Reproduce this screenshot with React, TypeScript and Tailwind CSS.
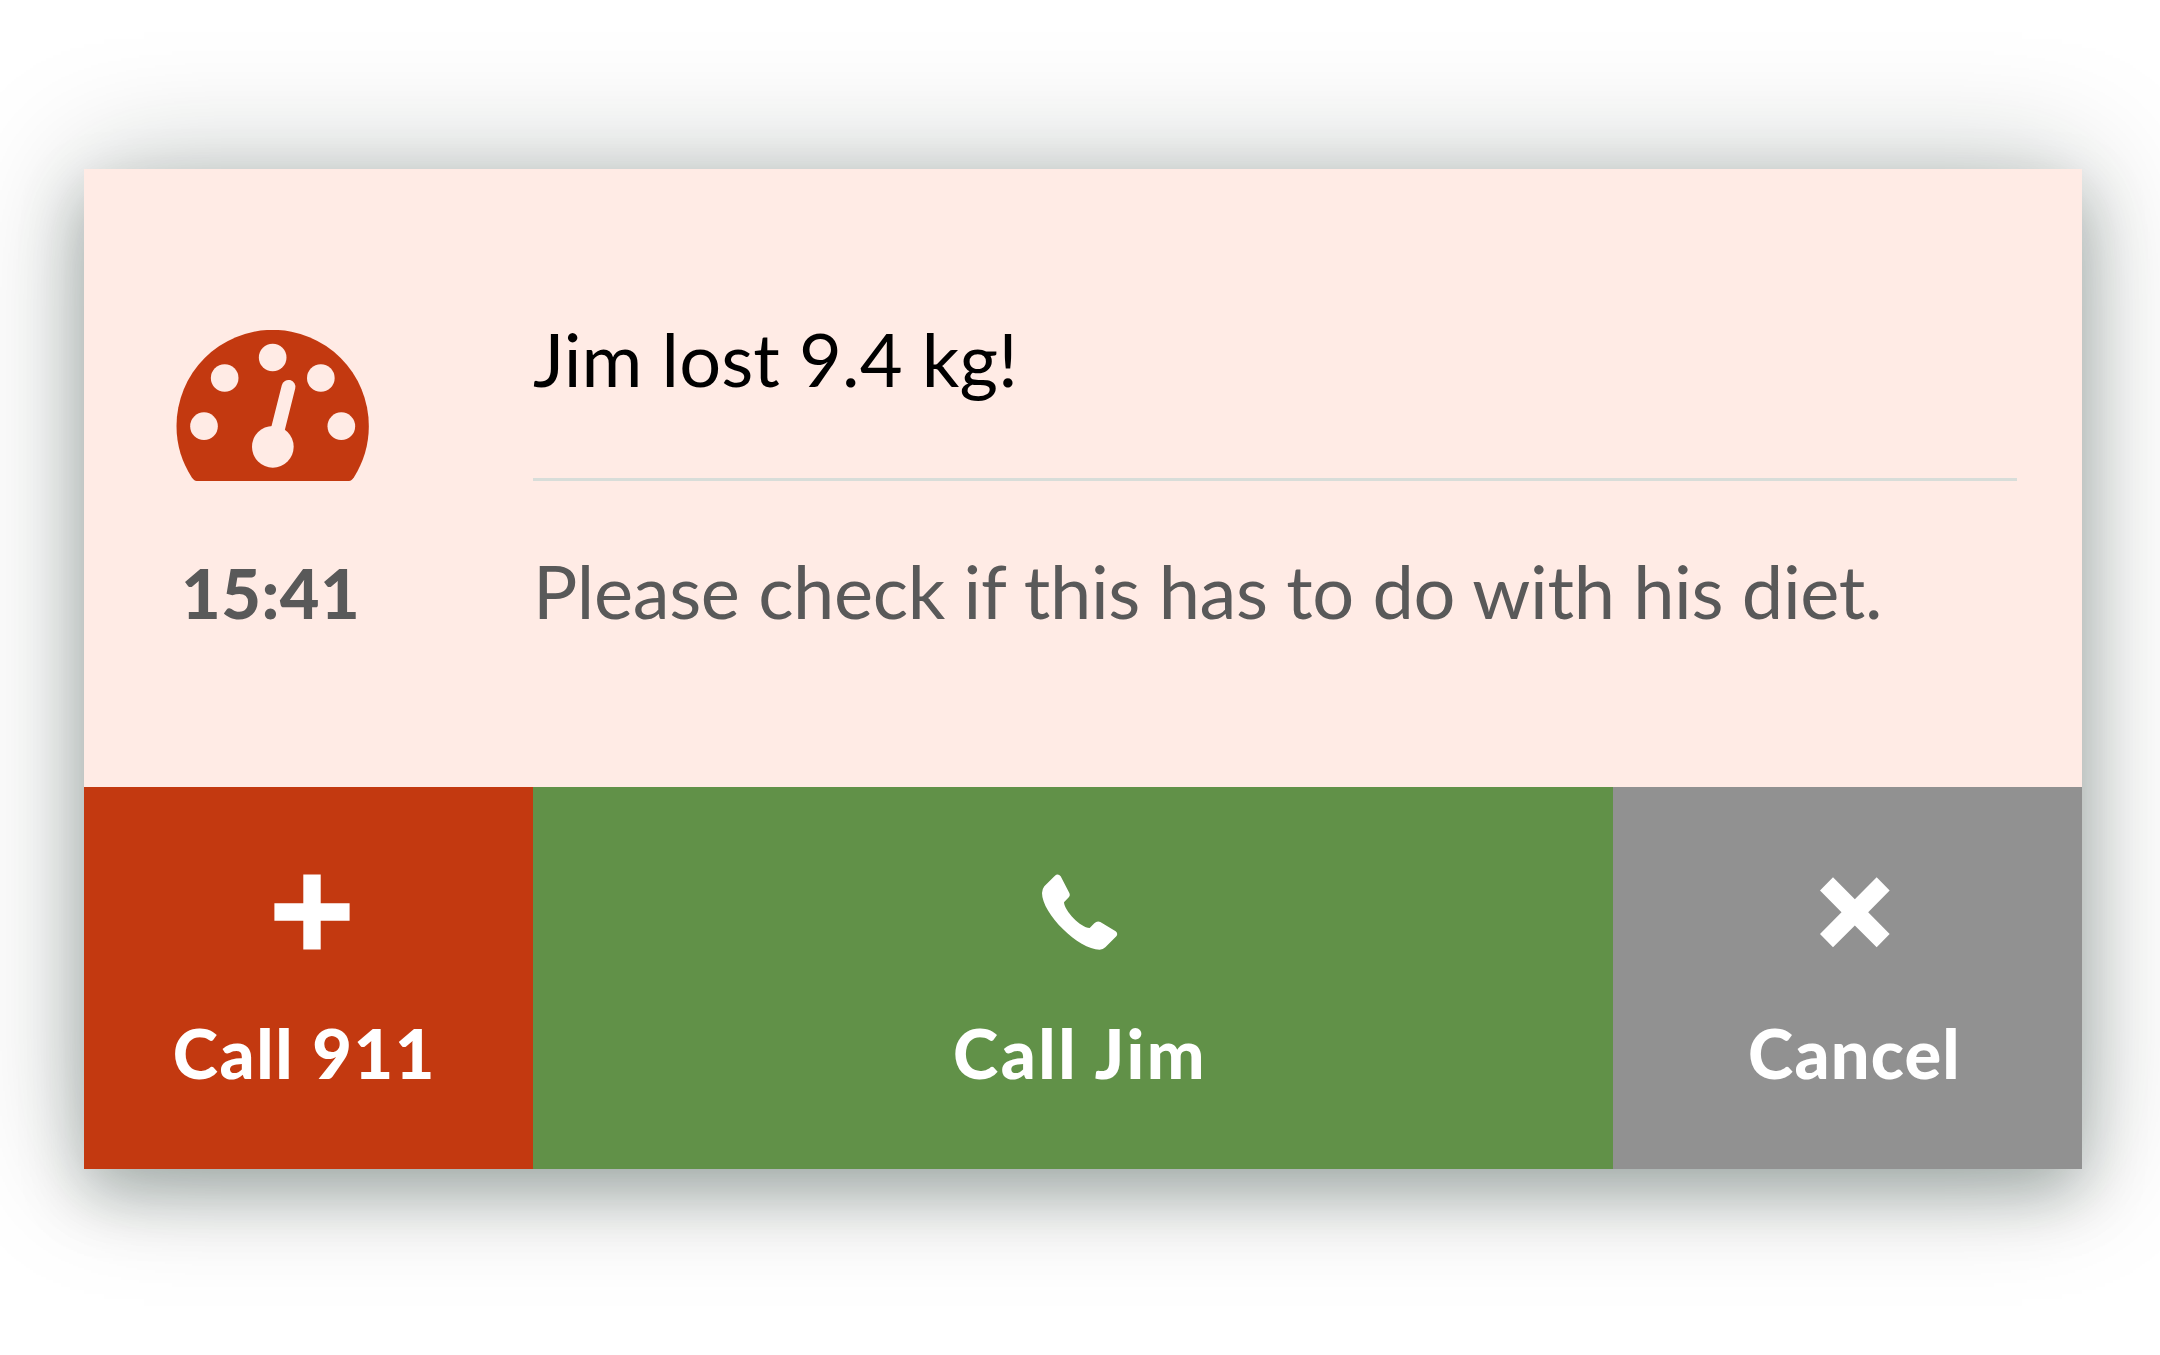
import React from "react";

function GaugeIcon() {
  return (
    <svg className="block h-[152px] w-[193px]" viewBox="48 60 579 456" fill="none">
      <path
        d="M110 513 Q102 513 95 502 C66 456 49.500 406 49.500 348 A288.500 288.500 0 0 1 626.500 348 C626.500 406 610 456 582 502 Q575 513 567 513 Z"
        fill="#c33910"
      />
      <g fill="#ffebe5">
        <circle cx="132" cy="348.500" r="41.500" />
        <circle cx="194" cy="204" r="41.500" />
        <circle cx="338" cy="142.500" r="41.500" />
        <circle cx="482.500" cy="204" r="41.500" />
        <circle cx="544" cy="348.500" r="41.500" />
        <circle cx="338.500" cy="410.500" r="62.500" />
      </g>
      <path d="M385.500 230.500 L347 384" stroke="#ffebe5" strokeWidth="41.500" strokeLinecap="round" />
    </svg>
  );
}

function PlusIcon() {
  return (
    <svg className="block size-[76px]" viewBox="0 0 76 76" fill="#fff">
      <path d="M29.300 0.400H46.700V29.300H75.600V46.700H46.700V75.600H29.300V46.700H0.400V29.300H29.300Z" />
    </svg>
  );
}

function PhoneIcon() {
  return (
    <svg className="block size-[76px]" viewBox="66 73 228 228" fill="#fff">
      <path d="M104 79 Q114 70 122 80 L148 130 Q151 137 147 142 L132 158 C133 183 182 235 209 235 L223 221 Q231 213 241 217 L287 245 Q295 251 289 260 L256 293 Q249 300 239 300 C176 300 66 192 66 130 Q66 119 73 110 Z" />
    </svg>
  );
}

function CrossIcon() {
  return (
    <svg className="block size-[76px]" viewBox="50 74 228 228" fill="#fff">
      <path d="M98 84 L163.500 149.500 L229 84 L268 123.500 L203.500 188.500 L268 254 L229 293.500 L163.500 228.500 L98 293.500 L59 254 L123.500 188.500 L59 123.500 Z" />
    </svg>
  );
}

type ActionProps = {
  label: string;
  icon: React.ReactNode;
  className: string;
  labelClassName: string;
};

function Action({ label, icon, className, labelClassName }: ActionProps) {
  return (
    <button
      className={`flex flex-col items-center pt-[87px] text-[68.500px] leading-[80px] font-black text-white ${className}`}
    >
      {icon}
      <span className={`mt-[63px] whitespace-nowrap ${labelClassName}`}>{label}</span>
    </button>
  );
}

export default function App() {
  return (
    <main className="h-[1355px] w-[2160px] overflow-hidden bg-white pt-[169px] pl-[84px] font-['Lato',sans-serif]">
      <section className="flex h-[1000px] w-[1998px] flex-col bg-[#ffebe5] shadow-[0_0_120px_rgba(0,27,18,0.26),0_26px_58px_rgba(0,27,18,0.26)]">
        <div className="grid h-[618px] grid-cols-[449px_1484px] pt-[161px]">
          <div className="flex flex-col pl-[92px]">
            <GaugeIcon />
            <time className="mt-[71px] ml-[5px] text-[68.500px] leading-[80px] font-black tracking-[0.500px] whitespace-nowrap text-[#595959]">
              15:41
            </time>
          </div>
          <div className="flex flex-col">
            <h1 className="-mt-[3px] h-[151px] text-[74px] leading-[64px] font-normal tracking-[0.100px] whitespace-nowrap text-black">
              Jim lost 9.4 kg!
            </h1>
            <hr className="h-[3px] w-full border-0 bg-[#d8ddd9]" />
            <p className="mt-[70px] text-[74px] leading-[80px] tracking-[-0.350px] whitespace-nowrap text-[#595959]">
              Please check if this has to do with his diet.
            </p>
          </div>
        </div>
        <div className="grid flex-1 grid-cols-[449px_1080px_1fr]">
          <Action
            label="Call 911"
            icon={<PlusIcon />}
            className="bg-[#c33910] pl-[6px]"
            labelClassName="-ml-[14px] tracking-[1.600px]"
          />
          <Action
            label="Call Jim"
            icon={<PhoneIcon />}
            className="bg-[#619148] pl-[14px]"
            labelClassName="tracking-[2.500px]"
          />
          <Action
            label="Cancel"
            icon={<CrossIcon />}
            className="bg-[#919191] pl-[14px]"
            labelClassName="tracking-[1.200px]"
          />
        </div>
      </section>
    </main>
  );
}
